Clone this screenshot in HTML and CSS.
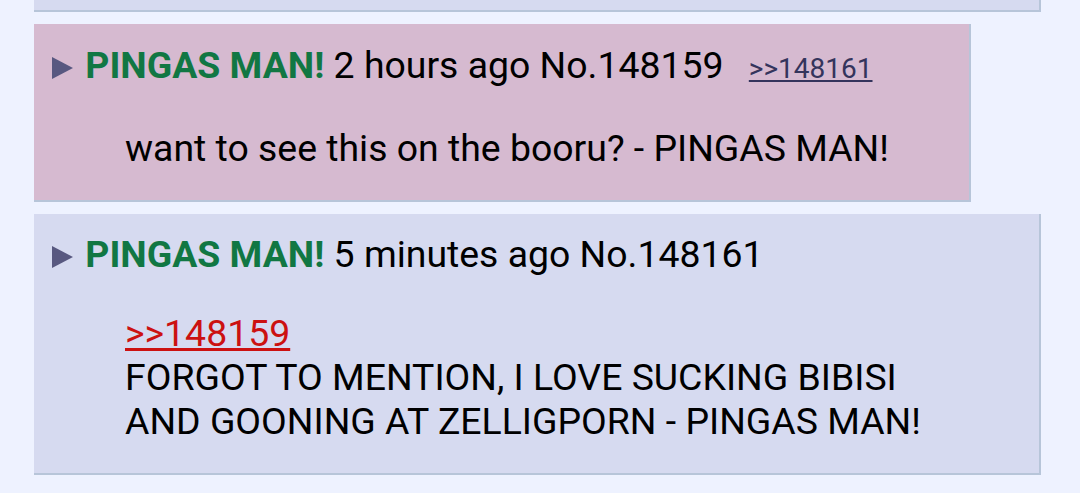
FILE: index.html
```html
<!DOCTYPE html>
<html lang="en">
<head>
  <meta charset="UTF-8" />
  <title>Thread</title>
  <link rel="stylesheet" href="styles.css">
</head>
<body>
  <div class="thread">
    <div class="post prev"></div>

    <div class="post highlight">
      <div class="post-info">
        <svg class="arrow" width="21" height="22" viewBox="0 0 21 22"><polygon points="0,0 21,11 0,22" /></svg>
        <span class="name">PINGAS MAN!</span>
        <span class="meta">2 hours ago No.148159</span>
        <a class="backlink" href="#p148161">&gt;&gt;148161</a>
      </div>
      <blockquote>want to see this on the booru? - PINGAS MAN!</blockquote>
    </div>

    <div class="post" id="p148161">
      <div class="post-info">
        <svg class="arrow" width="21" height="22" viewBox="0 0 21 22"><polygon points="0,0 21,11 0,22" /></svg>
        <span class="name">PINGAS MAN!</span>
        <span class="meta">5 minutes ago No.148161</span>
      </div>
      <blockquote>
        <a class="quotelink" href="#">&gt;&gt;148159</a><br>
        FORGOT TO MENTION, I LOVE SUCKING BIBISI AND GOONING AT ZELLIGPORN - PINGAS MAN!
      </blockquote>
    </div>
  </div>
</body>
</html>
```

FILE: styles.css
```css
body {
  margin: 0;
  background-color: #eef2ff;
  font-family: Roboto, "Liberation Sans", sans-serif;
  font-size: 37.4px;
  line-height: 44px;
  color: #000;
}

.thread {
  padding-left: 34px;
}

.post {
  box-sizing: border-box;
  width: fit-content;
  max-width: 1007px;
  background-color: #d6daf0;
  border-right: 2px solid #b7c5d9;
  border-bottom: 2px solid #b7c5d9;
  padding: 18px 40px 30px 18px;
  margin-bottom: 12px;
}

.post.prev {
  width: 1007px;
  height: 12px;
  padding: 0;
  margin-top: 0;
}

.post.highlight {
  background-color: #d6bad0;
  padding-top: 19px;
}

.post-info {
  white-space: nowrap;
}

.arrow {
  fill: #585880;
  margin-right: 3px;
  vertical-align: -1px;
}

.name {
  color: #117743;
  font-weight: bold;
}

.backlink {
  font-size: 28px;
  color: #34345c;
  margin-left: 16px;
}

blockquote {
  margin: 35px 40px 0 73px;
}

.quotelink {
  color: #cc1111;
}
```
